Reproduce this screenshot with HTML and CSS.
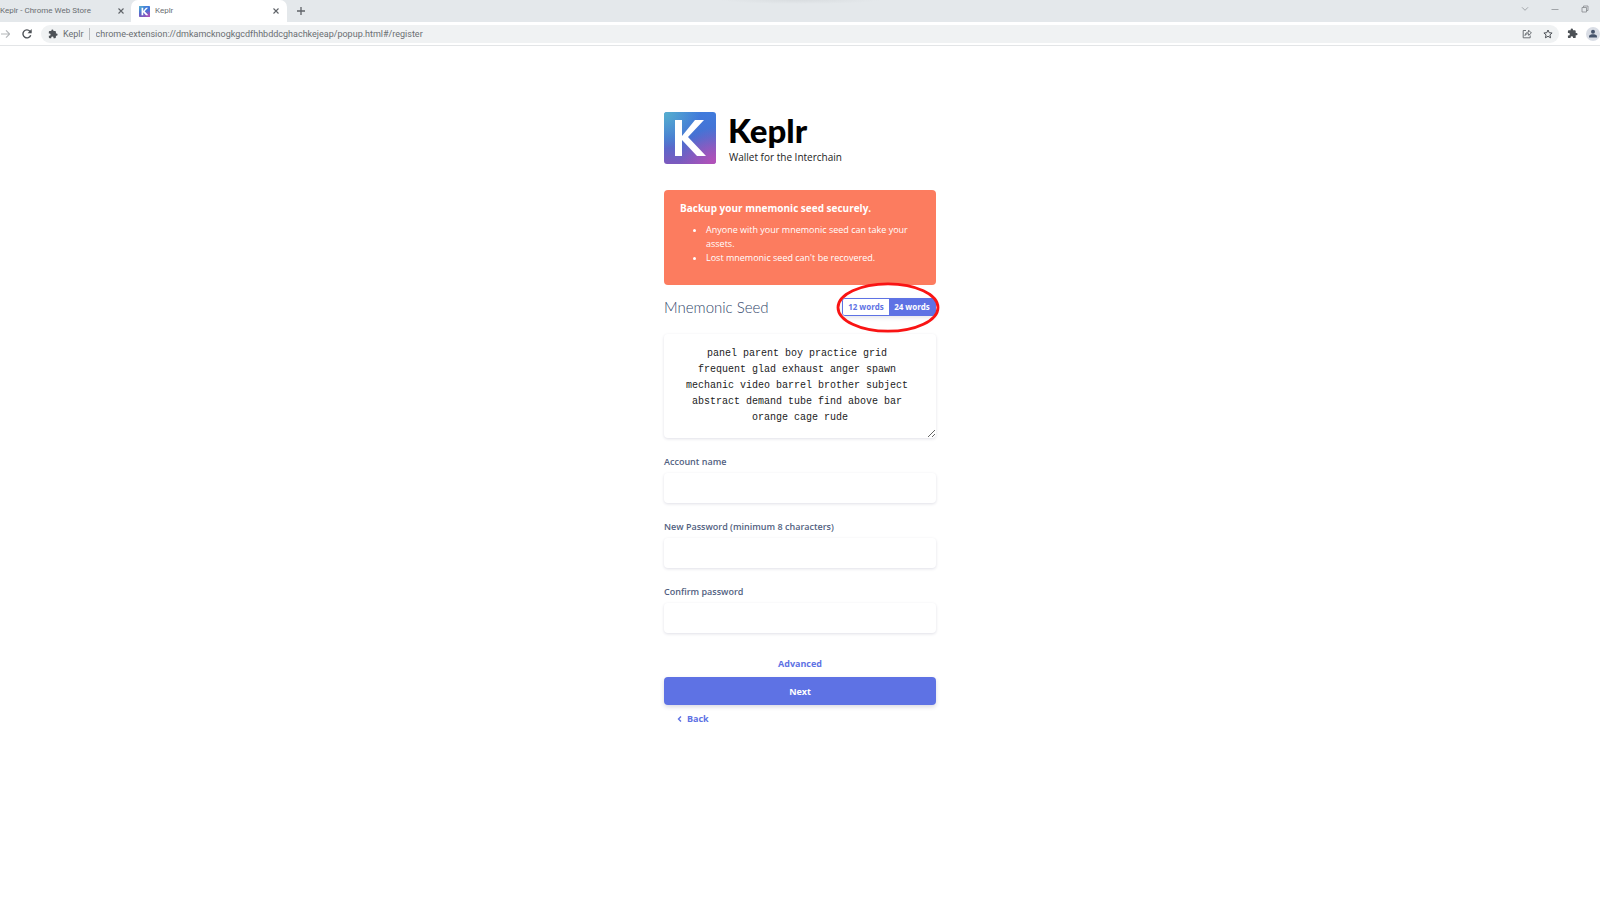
FILE: index.html
```html
<!DOCTYPE html>
<html lang="en">
<head>
<meta charset="utf-8">
<title>Keplr</title>
<link rel="stylesheet" href="styles.css">
</head>
<body>
<header class="browser">
  <div class="tabs">
    <div class="tab tab-store">
      <span class="tab-title">Keplr - Chrome Web Store</span>
      <button class="icon-btn" aria-label="Close tab"><svg width="8" height="8" viewBox="0 0 8 8"><path d="M1.500 1.500l5 5M6.500 1.500l-5 5" stroke="#5f6368" stroke-width="1.100"/></svg></button>
    </div>
    <div class="tab tab-active">
      <svg width="11" height="11" viewBox="0 0 52 52"><rect width="52" height="52" rx="3" fill="url(#logo-base)"/><rect width="52" height="52" rx="3" fill="url(#logo-glow)"/><rect width="52" height="52" rx="3" fill="url(#logo-pink)"/><path d="M12 8h8v16L33 8h10L27 25l17 19H33L20 29v15h-8z" fill="#fff"/></svg>
      <span class="tab-title">Keplr</span>
      <button class="icon-btn" aria-label="Close tab"><svg width="8" height="8" viewBox="0 0 8 8"><path d="M1.500 1.500l5 5M6.500 1.500l-5 5" stroke="#5f6368" stroke-width="1.100"/></svg></button>
    </div>
    <button class="icon-btn new-tab" aria-label="New tab"><svg width="10" height="10" viewBox="0 0 10 10"><path d="M5 1v8M1 5h8" stroke="#5f6368" stroke-width="1.300"/></svg></button>
    <div class="window-buttons">
      <button class="icon-btn" aria-label="Search tabs"><svg width="8" height="8" viewBox="0 0 8 8"><path d="M1 2.300l3 3 3-3" fill="none" stroke="#a0a4a8"/></svg></button>
      <button class="icon-btn" aria-label="Minimize"><svg width="8" height="8" viewBox="0 0 8 8"><path d="M.5 4.500h7" stroke="#a0a4a8"/></svg></button>
      <button class="icon-btn" aria-label="Restore"><svg width="8" height="8" viewBox="0 0 8 8"><path d="M1 2.500h4.500V7H1zM2.500 2.500V1H7v4.500H5.500" fill="none" stroke="#85898d" stroke-width=".8"/></svg></button>
    </div>
  </div>
  <div class="toolbar">
    <button class="icon-btn" aria-label="Forward"><svg width="10" height="10" viewBox="0 0 10 10"><path d="M1 5h8.500M6 1.300L9.700 5 6 8.700" fill="none" stroke="#b4b7ba" stroke-width="1.200"/></svg></button>
    <button class="icon-btn" aria-label="Reload"><svg width="12" height="12" viewBox="0 0 12 12"><path d="M9.700 7.300A4 4 0 1 1 8.900 3.200L10 4.300" fill="none" stroke="#4d5156" stroke-width="1.400"/><path d="M10.700 1v4.200H6.500z" fill="#4d5156"/></svg></button>
    <div class="address">
      <svg width="10" height="10" viewBox="0 0 24 24"><path d="M20.500 11H19V7a2 2 0 0 0-2-2h-4V3.500a2.500 2.500 0 0 0-5 0V5H4a2 2 0 0 0-2 2v3.800h1.500a2.700 2.700 0 0 1 0 5.400H2V20a2 2 0 0 0 2 2h3.800v-1.500a2.700 2.700 0 0 1 5.400 0V22H17a2 2 0 0 0 2-2v-4h1.500a2.500 2.500 0 0 0 0-5z" fill="#4d5156"/></svg>
      <span class="ext-name">Keplr</span>
      <input class="url" type="text" aria-label="Address" value="chrome-extension://dmkamcknogkgcdfhhbddcghachkejeap/popup.html#/register">
      <button class="icon-btn" aria-label="Share"><svg width="10" height="10" viewBox="0 0 10 10"><path d="M4 1.500H1.200v7.300h7V6.500M3 6.500c.3-2.300 1.700-3.300 3.600-3.400V1.200L9.400 4 6.600 6.300V4.600C5 4.600 3.800 5.300 3 6.500z" fill="none" stroke="#5f6368" stroke-width=".9"/></svg></button>
      <button class="icon-btn" aria-label="Bookmark"><svg width="10" height="10" viewBox="0 0 10 10"><path d="M5 1l1.200 2.700 2.900.3-2.200 1.900.7 2.900L5 7.300 2.400 8.800l.7-2.900L.9 4l2.900-.3z" fill="none" stroke="#4d5156"/></svg></button>
    </div>
    <button class="icon-btn" aria-label="Extensions"><svg width="11" height="11" viewBox="0 0 24 24"><path d="M20.500 11H19V7a2 2 0 0 0-2-2h-4V3.500a2.500 2.500 0 0 0-5 0V5H4a2 2 0 0 0-2 2v3.800h1.500a2.700 2.700 0 0 1 0 5.400H2V20a2 2 0 0 0 2 2h3.800v-1.500a2.700 2.700 0 0 1 5.400 0V22H17a2 2 0 0 0 2-2v-4h1.500a2.500 2.500 0 0 0 0-5z" fill="#4d5156"/></svg></button>
    <button class="icon-btn" aria-label="Profile"><svg width="14" height="14" viewBox="0 0 14 14"><circle cx="7" cy="7" r="7" fill="#d9dde5"/><circle cx="7" cy="4.800" r="2" fill="#46546b"/><path d="M3 10.500V9.300C3 7.900 5.500 7.300 7 7.300s4 .6 4 2v1.200z" fill="#46546b"/></svg></button>
  </div>
</header>
<main class="page">
  <div class="brand">
    <svg width="52" height="52" viewBox="0 0 52 52" role="img" aria-label="Keplr logo">
      <defs>
        <linearGradient id="logo-base" x1="0" y1="0" x2="0" y2="1"><stop offset="0" stop-color="#407bdc"/><stop offset=".5" stop-color="#4770d2"/><stop offset="1" stop-color="#7d59bd"/></linearGradient>
        <radialGradient id="logo-glow" cx="0" cy="0" r=".7"><stop offset="0" stop-color="#57b0cd"/><stop offset="1" stop-color="#57b0cd" stop-opacity="0"/></radialGradient>
        <radialGradient id="logo-pink" cx="1" cy="1" r=".7"><stop offset="0" stop-color="#b750b8"/><stop offset="1" stop-color="#b750b8" stop-opacity="0"/></radialGradient>
      </defs>
      <rect width="52" height="52" rx="3" fill="url(#logo-base)"/><rect width="52" height="52" rx="3" fill="url(#logo-glow)"/><rect width="52" height="52" rx="3" fill="url(#logo-pink)"/>
      <path d="M11 8h7v16L31 8h9L24 25l18 19h-9L18 28v16h-7z" fill="#fff"/>
    </svg>
    <div class="brand-text">
      <div class="wordmark">Keplr</div>
      <div class="tagline">Wallet for the Interchain</div>
    </div>
  </div>
  <section class="alert">
    <h2 class="alert-title">Backup your mnemonic seed securely.</h2>
    <ul class="alert-list">
      <li>Anyone with your mnemonic seed can take your assets.</li>
      <li>Lost mnemonic seed can't be recovered.</li>
    </ul>
  </section>
  <form class="form">
    <div class="seed-head">
      <label class="seed-title" for="seed">Mnemonic Seed</label>
      <div class="toggle">
        <button type="button" class="toggle-btn">12 words</button>
        <button type="button" class="toggle-btn toggle-on">24 words</button>
        <svg class="mark" width="104" height="51" viewBox="0 0 104 51"><ellipse cx="52" cy="25.500" rx="50" ry="23.700" fill="none" stroke="#f91414" stroke-width="2.800"/></svg>
      </div>
    </div>
    <textarea class="seed" id="seed">panel parent boy practice grid frequent glad exhaust anger spawn mechanic video barrel brother subject abstract demand tube find above bar orange cage rude</textarea>
    <div class="field"><label for="account">Account name</label><input id="account" type="text"></div>
    <div class="field"><label for="password">New Password (minimum 8 characters)</label><input id="password" type="password"></div>
    <div class="field"><label for="confirm">Confirm password</label><input id="confirm" type="password"></div>
    <button type="button" class="text-btn">Advanced</button>
    <button type="button" class="next">Next</button>
    <button type="button" class="text-btn back"><svg width="5" height="8" viewBox="0 0 5 8"><path d="M4 1.500L1.500 4 4 6.500" fill="none" stroke="#5e72e4" stroke-width="1.400"/></svg>Back</button>
  </form>
</main>
</body>
</html>
```
FILE: styles.css
```css
* { box-sizing: border-box; }
body { margin: 0; background: #fff; font-family: "Open Sans", "Noto Sans", sans-serif; }
button { border: 0; padding: 0; background: none; font: inherit; }
svg { display: block; flex: none; }

.browser { font-family: Roboto, sans-serif; color: #6a6e72; border-bottom: 1px solid #e3e5e7; }
.tabs { display: flex; height: 22px; background: #e4e8eb radial-gradient(80px 4px at 50% 0, #d9dde0, #e4e8eb); }
.tab { display: flex; align-items: center; font-size: 8px; line-height: 22px; }
.tab-title { flex: 1; white-space: nowrap; }
.tab-store { width: 131px; padding-right: 6px; }
.tab-active { width: 156px; padding: 0 7px 0 8px; gap: 5px; background: #fff; border-radius: 7px 7px 0 0; }
.new-tab { margin-left: 9px; }
.window-buttons { display: flex; align-items: center; gap: 22px; margin-left: auto; padding: 0 11px 4px 0; }
.toolbar { display: flex; align-items: center; height: 23px; background: #fff; }
.toolbar > .icon-btn + .icon-btn { margin-left: 11px; }
.toolbar > .address + .icon-btn + .icon-btn { margin-left: 8px; }
.address { display: flex; flex: 1; align-items: center; height: 18px; margin: 0 8px; padding: 0 6px 0 7px; border-radius: 9px; background: #f0f2f3; font-size: 9px; }
.ext-name { margin-left: 5px; padding-right: 5px; border-right: 1px solid #b9bcbf; line-height: 12px; }
.url { flex: 1; min-width: 0; margin: 0 0 0 6px; padding: 0; border: 0; background: none; color: inherit; font: inherit; }
.address .icon-btn { margin-left: 11px; }

.page { width: 100%; max-width: 272px; margin: 0 auto; padding-top: 66px; }
.brand { display: flex; gap: 12px; }
.wordmark { font-family: "Lato", sans-serif; font-size: 33px; line-height: 36px; font-weight: 900; color: #000; }
.tagline { padding: 2px 0 0 1px; font-size: 10px; line-height: 14px; color: #222; white-space: nowrap; }

.alert { margin-top: 26px; padding: 10px 16px 20px; border-radius: 4px; background: #fc7c5f; color: #fff; }
.alert-title { margin: 0 0 7px; font-size: 10px; line-height: 16px; font-weight: 700; white-space: nowrap; }
.alert-list { margin: 0; padding-left: 26px; font-size: 9px; line-height: 14px; }

.form { display: flex; flex-direction: column; }
.seed-head { display: flex; align-items: center; justify-content: space-between; margin-top: 12px; height: 20px; }
.seed-title { font-family: "Lato", sans-serif; font-size: 15px; line-height: 20px; font-weight: 300; color: #32476b; }
.toggle { position: relative; display: flex; height: 18px; border: 1px solid #5e72e4; border-radius: 3px; box-shadow: 0 2px 4px rgba(50, 50, 93, .12); }
.toggle-btn { width: 46px; font-size: 8px; line-height: 16px; font-weight: 700; color: #5e72e4; background: #fff; border-radius: 2px; white-space: nowrap; }
.toggle-on { background: #5e72e4; color: #fff; border-radius: 0; }
.mark { position: absolute; left: -7px; top: -17px; pointer-events: none; }

.seed, .field input { width: 100%; border: 0; border-radius: 4px; background: #fff; box-shadow: 0 1px 3px rgba(50, 50, 93, .15); outline: 0; }
.seed { height: 104px; margin-top: 17px; padding: 12px 20px; overflow: hidden; font-family: "Liberation Mono", monospace; font-size: 10px; line-height: 16px; text-align: center; white-space: break-spaces; color: #222; resize: vertical; }
.field { display: flex; flex-direction: column; gap: 4px; margin-top: 17px; }
.field label { font-size: 9px; line-height: 14px; font-weight: 600; color: #525f7f; }
.field input { height: 30px; padding: 0 8px; }
.text-btn { align-self: center; margin-top: 24px; font-size: 9px; line-height: 14px; font-weight: 700; color: #5e72e4; }
.next { height: 28px; margin-top: 6px; border-radius: 4px; background: #5e72e4; color: #fff; font-size: 9px; font-weight: 700; box-shadow: 0 2px 4px rgba(50, 50, 93, .18); }
.back { display: flex; align-items: center; align-self: flex-start; gap: 5px; margin: 7px 0 0 13px; }
```
